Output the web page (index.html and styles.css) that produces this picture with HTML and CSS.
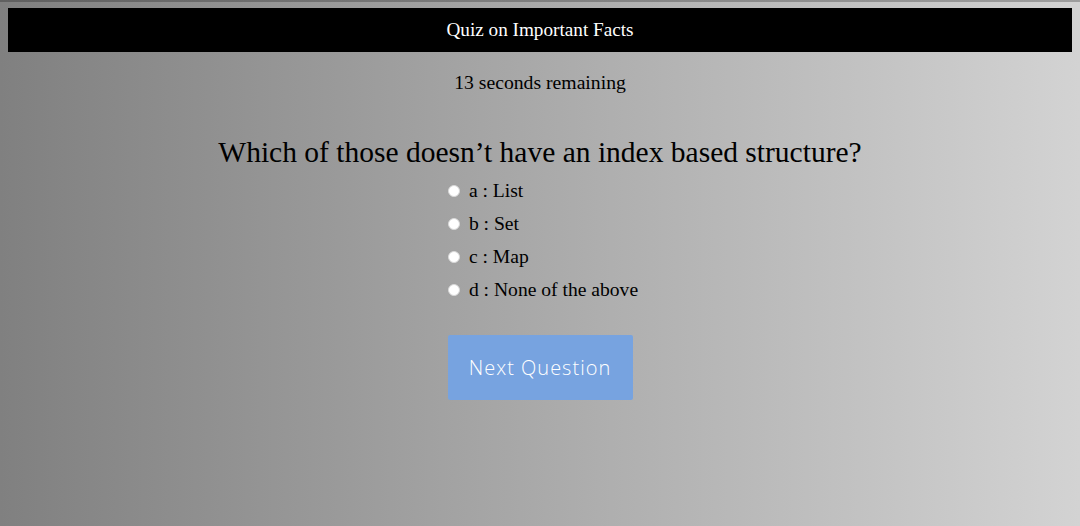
FILE: index.html
```html
<!DOCTYPE html>
<html>
<head>
<meta charset="utf-8">
<link rel="stylesheet" href="styles.css">
</head>
<body>
<header class="topbar">Quiz on Important Facts</header>
<div class="timer">13 seconds remaining</div>
<main class="quiz">
  <h2 class="question">Which of those doesn’t have an index based structure?</h2>
  <div class="options">
    <label class="option"><input type="radio" name="q"> a : List</label>
    <label class="option"><input type="radio" name="q"> b : Set</label>
    <label class="option"><input type="radio" name="q"> c : Map</label>
    <label class="option"><input type="radio" name="q"> d : None of the above</label>
  </div>
  <button class="next">Next Question</button>
</main>
</body>
</html>
```
FILE: styles.css
```css
html {
  height: 100%;
  background:
    linear-gradient(rgba(0,0,0,0.25), rgba(0,0,0,0.25)) 0 0 / 100% 2px no-repeat,
    linear-gradient(to right, #808080, #d3d3d3);
}
body {
  margin: 8px;
  font-family: "Liberation Serif", "Times New Roman", serif;
  color: #000;
}
.topbar {
  background: #000;
  color: #fff;
  height: 44px;
  display: flex;
  align-items: center;
  justify-content: center;
  font-size: 19.2px;
}
.timer {
  text-align: center;
  font-size: 19.7px;
  margin-top: 18px;
  line-height: 24px;
}
.quiz {
  display: flex;
  flex-direction: column;
  align-items: center;
}
.question {
  font-weight: normal;
  font-size: 29.5px;
  line-height: 34px;
  margin: 41px 0 0;
}
.options {
  display: flex;
  flex-direction: column;
  align-items: flex-start;
  margin-top: 5px;
  padding-left: 6px;
}
.option {
  display: flex;
  align-items: center;
  font-size: 19.6px;
  height: 33px;
  gap: 9px;
}
.option input {
  appearance: none;
  -webkit-appearance: none;
  width: 12px;
  height: 12px;
  margin: 0;
  border-radius: 50%;
  background: #fff;
  border: 1px solid #d8d8d8;
  box-sizing: border-box;
}
.next {
  margin-top: 29px;
  width: 185px;
  height: 65px;
  border: none;
  border-radius: 2px;
  background: #77a3e0;
  color: #fff;
  font-family: "Open Sans", "Inter", sans-serif;
  font-weight: 300;
  font-size: 20px;
  letter-spacing: 1px;
}
```
